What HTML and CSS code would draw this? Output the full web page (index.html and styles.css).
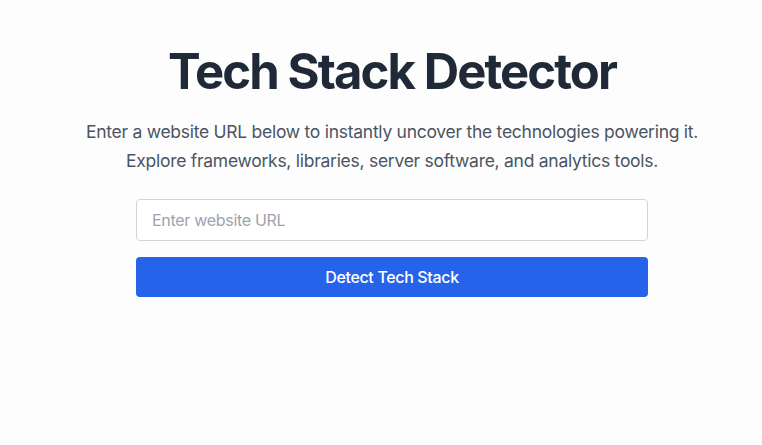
FILE: index.html
```html
<!DOCTYPE html>
<html lang="en">
<head>
<meta charset="utf-8">
<title>Tech Stack Detector</title>
<link rel="stylesheet" href="styles.css">
</head>
<body>
<main class="page">
  <h1 class="title">Tech Stack Detector</h1>
  <p class="lead">Enter a website URL below to instantly uncover the technologies powering it.<br>Explore frameworks, libraries, server software, and analytics tools.</p>
  <form class="form">
    <input class="url" type="text" placeholder="Enter website URL">
    <button class="btn" type="button">Detect Tech Stack</button>
  </form>
</main>
</body>
</html>
```
FILE: styles.css
```css
html, body {
  margin: 0;
  padding: 0;
  background: #fdfdfd;
}
body {
  font-family: Inter, "Noto Sans", sans-serif;
  color: #1f2937;
}
.page {
  display: flex;
  flex-direction: column;
  align-items: center;
  padding: 46px 0 0 22px;
}
.title {
  margin: 0;
  font-size: 49px;
  line-height: 52px;
  font-weight: 700;
  color: #1f2937;
  letter-spacing: -1.9px;
}
.lead {
  margin: 19px 0 0;
  font-size: 17.5px;
  line-height: 29px;
  letter-spacing: -0.27px;
  color: #4b5563;
  text-align: center;
}
.form {
  margin-top: 24px;
  width: 512px;
  display: flex;
  flex-direction: column;
  gap: 16px;
}
.url {
  box-sizing: border-box;
  height: 42px;
  width: 100%;
  border: 1px solid #d1d5db;
  border-radius: 4px;
  padding: 0 15px;
  font-family: inherit;
  font-size: 16px;
  letter-spacing: -0.3px;
  color: #1f2937;
  background: #fff;
  outline: none;
}
.url::placeholder {
  color: #9ca3af;
}
.btn {
  height: 40px;
  width: 100%;
  border: 0;
  border-radius: 4px;
  background: #2563eb;
  color: #fff;
  font-family: inherit;
  font-size: 16px;
  font-weight: 500;
  letter-spacing: -0.35px;
  cursor: pointer;
}
```
